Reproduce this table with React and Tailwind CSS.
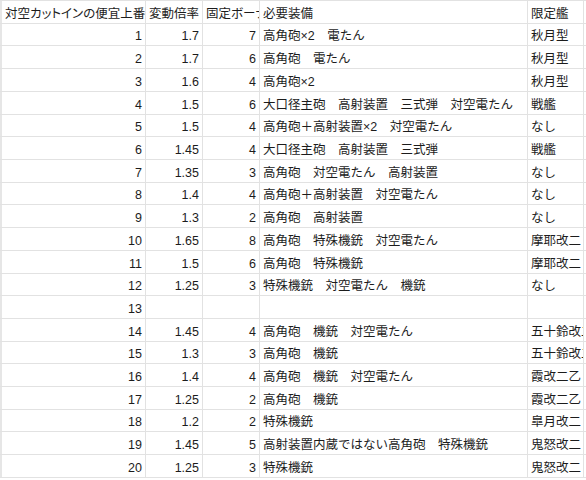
const header = ["対空カットインの便宜上番号", "変動倍率", "固定ボーナス", "必要装備", "限定艦"];

const rows = [
  [1, "1.7", "7", "高角砲×2　電たん", "秋月型"],
  [2, "1.7", "6", "高角砲　電たん", "秋月型"],
  [3, "1.6", "4", "高角砲×2", "秋月型"],
  [4, "1.5", "6", "大口径主砲　高射装置　三式弾　対空電たん", "戦艦"],
  [5, "1.5", "4", "高角砲＋高射装置×2　対空電たん", "なし"],
  [6, "1.45", "4", "大口径主砲　高射装置　三式弾", "戦艦"],
  [7, "1.35", "3", "高角砲　対空電たん　高射装置", "なし"],
  [8, "1.4", "4", "高角砲＋高射装置　対空電たん", "なし"],
  [9, "1.3", "2", "高角砲　高射装置", "なし"],
  [10, "1.65", "8", "高角砲　特殊機銃　対空電たん", "摩耶改二"],
  [11, "1.5", "6", "高角砲　特殊機銃", "摩耶改二"],
  [12, "1.25", "3", "特殊機銃　対空電たん　機銃", "なし"],
  [13, "", "", "", ""],
  [14, "1.45", "4", "高角砲　機銃　対空電たん", "五十鈴改二"],
  [15, "1.3", "3", "高角砲　機銃", "五十鈴改二"],
  [16, "1.4", "4", "高角砲　機銃　対空電たん", "霞改二乙"],
  [17, "1.25", "2", "高角砲　機銃", "霞改二乙"],
  [18, "1.2", "2", "特殊機銃", "皐月改二"],
  [19, "1.45", "5", "高射装置内蔵ではない高角砲　特殊機銃", "鬼怒改二"],
  [20, "1.25", "3", "特殊機銃", "鬼怒改二"],
];

const PITCH = 22.71;

function rowHeight(i) {
  return Math.round((i + 1) * PITCH) - Math.round(i * PITCH);
}

const cell =
  "flex items-end pb-[1px] px-[3px] overflow-hidden whitespace-nowrap border-r border-[#e2e2e2]";

function Row({ values, index, isHeader }) {
  const h = rowHeight(index) === 23 ? "h-[23px]" : "h-[22px]";
  return (
    <div className={`flex ${h} border-b border-[#e2e2e2] ${isHeader ? "[font-feature-settings:'palt']" : ""}`}>
      <div className="w-[2px] shrink-0 bg-[#e6e6e6]" />
      <div className={`${cell} w-[144px] ${isHeader ? "" : "justify-end"}`}>{values[0]}</div>
      <div className={`${cell} w-[57px] ${isHeader ? "" : "justify-end"}`}>{values[1]}</div>
      <div className={`${cell} w-[57px] ${isHeader ? "" : "justify-end"}`}>{values[2]}</div>
      <div className={`${cell} w-[268px]`}>{values[3]}</div>
      <div className={`${cell} w-[56px]`}>{values[4]}</div>
    </div>
  );
}

export default function App() {
  return (
    <div className="w-[586px] h-[480px] overflow-hidden bg-white text-[#1c1c1c] text-[12.5px] leading-[15px] font-['Liberation_Sans','Noto_Sans_CJK_JP',sans-serif]">
      <div className="border-t border-[#e2e2e2]" />
      <Row values={header} index={0} isHeader />
      {rows.map((r, i) => (
        <Row key={r[0]} values={r} index={i + 1} />
      ))}
    </div>
  );
}
